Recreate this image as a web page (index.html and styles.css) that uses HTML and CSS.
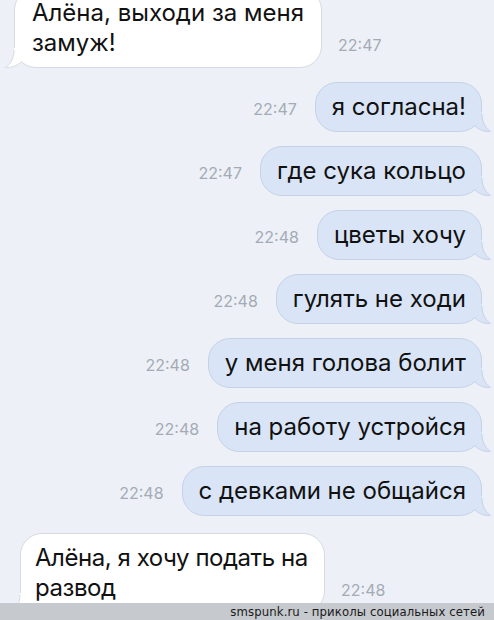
FILE: index.html
```html
<!DOCTYPE html>
<html>
<head>
    <title>Алёна</title>
    <link rel="stylesheet" href="styles.css">
</head>
<body>
    <div class="chat">
        <!-- Her -->
        <div class="row in first">
            <div class="bubble in-bubble wide1">
                Алёна, выходи за меня замуж!
                <svg class="tail" width="16" height="20" viewBox="0 0 16 20"><path class="tail-fill" d="M0,0 L7,0 C7,9 9.5,15.5 15.5,19.5 C10,19.8 4,18 0,14 Z"/><path class="tail-line" d="M7,2 C7,9 9.5,15.5 15.5,19.5 C10,19.8 4,18 0,14"/></svg>
            </div>
            <span class="time">22:47</span>
        </div>

        <!-- Him -->
        <div class="row out"><span class="time">22:47</span><div class="bubble out-bubble">я согласна!<svg class="tail" width="16" height="20" viewBox="0 0 16 20"><path class="tail-fill" d="M0,0 L7,0 C7,9 9.5,15.5 15.5,19.5 C10,19.8 4,18 0,14 Z"/><path class="tail-line" d="M7,2 C7,9 9.5,15.5 15.5,19.5 C10,19.8 4,18 0,14"/></svg></div></div>
        <div class="row out"><span class="time">22:47</span><div class="bubble out-bubble">где сука кольцо<svg class="tail" width="16" height="20" viewBox="0 0 16 20"><path class="tail-fill" d="M0,0 L7,0 C7,9 9.5,15.5 15.5,19.5 C10,19.8 4,18 0,14 Z"/><path class="tail-line" d="M7,2 C7,9 9.5,15.5 15.5,19.5 C10,19.8 4,18 0,14"/></svg></div></div>
        <div class="row out"><span class="time">22:48</span><div class="bubble out-bubble">цветы хочу<svg class="tail" width="16" height="20" viewBox="0 0 16 20"><path class="tail-fill" d="M0,0 L7,0 C7,9 9.5,15.5 15.5,19.5 C10,19.8 4,18 0,14 Z"/><path class="tail-line" d="M7,2 C7,9 9.5,15.5 15.5,19.5 C10,19.8 4,18 0,14"/></svg></div></div>
        <div class="row out"><span class="time">22:48</span><div class="bubble out-bubble">гулять не ходи<svg class="tail" width="16" height="20" viewBox="0 0 16 20"><path class="tail-fill" d="M0,0 L7,0 C7,9 9.5,15.5 15.5,19.5 C10,19.8 4,18 0,14 Z"/><path class="tail-line" d="M7,2 C7,9 9.5,15.5 15.5,19.5 C10,19.8 4,18 0,14"/></svg></div></div>
        <div class="row out"><span class="time">22:48</span><div class="bubble out-bubble">у меня голова болит<svg class="tail" width="16" height="20" viewBox="0 0 16 20"><path class="tail-fill" d="M0,0 L7,0 C7,9 9.5,15.5 15.5,19.5 C10,19.8 4,18 0,14 Z"/><path class="tail-line" d="M7,2 C7,9 9.5,15.5 15.5,19.5 C10,19.8 4,18 0,14"/></svg></div></div>
        <div class="row out"><span class="time">22:48</span><div class="bubble out-bubble">на работу устройся<svg class="tail" width="16" height="20" viewBox="0 0 16 20"><path class="tail-fill" d="M0,0 L7,0 C7,9 9.5,15.5 15.5,19.5 C10,19.8 4,18 0,14 Z"/><path class="tail-line" d="M7,2 C7,9 9.5,15.5 15.5,19.5 C10,19.8 4,18 0,14"/></svg></div></div>
        <div class="row out"><span class="time">22:48</span><div class="bubble out-bubble">с девками не общайся<svg class="tail" width="16" height="20" viewBox="0 0 16 20"><path class="tail-fill" d="M0,0 L7,0 C7,9 9.5,15.5 15.5,19.5 C10,19.8 4,18 0,14 Z"/><path class="tail-line" d="M7,2 C7,9 9.5,15.5 15.5,19.5 C10,19.8 4,18 0,14"/></svg></div></div>

        <!-- Her again -->
        <div class="row in last">
            <div class="bubble in-bubble wide2">
                Алёна, я хочу подать на<br>развод
                <svg class="tail" width="16" height="20" viewBox="0 0 16 20"><path class="tail-fill" d="M0,0 L7,0 C7,9 9.5,15.5 15.5,19.5 C10,19.8 4,18 0,14 Z"/><path class="tail-line" d="M7,2 C7,9 9.5,15.5 15.5,19.5 C10,19.8 4,18 0,14"/></svg>
            </div>
            <span class="time">22:48</span>
        </div>
    </div>

    <div class="watermark">smspunk.ru - приколы социальных сетей</div>
</body>
</html>
```

FILE: styles.css
```css
body {
    margin: 0;
    height: 620px;
    overflow: hidden;
    background: #edf1f7;
    font-family: Inter, "Liberation Sans", sans-serif;
}
.chat {
    display: flex;
    flex-direction: column;
    gap: 14px;
}
.row {
    display: flex;
    align-items: last baseline;
}
.row.in {
    justify-content: flex-start;
    gap: 16px;
}
.row.out {
    justify-content: flex-end;
    gap: 18px;
    padding-right: 12px;
}
.row.first {
    margin-top: -12px;
    padding-left: 14px;
}
.row.last {
    padding-left: 20px;
    margin-top: 3px;
}
.bubble {
    position: relative;
    box-sizing: border-box;
    padding: 9px 15px 9px 16px;
    border-radius: 22px;
    font-size: 24px;
    line-height: 30px;
    color: #111;
}
.in-bubble {
    background: #fff;
    border: 1px solid #d6dbe3;
    padding-left: 17px;
}
.out-bubble {
    background: #d9e5f6;
    border: 1px solid #c5d2e5;
}
.wide1 {
    width: 308px;
}
.wide2 {
    width: 305px;
    padding-left: 14px;
    white-space: nowrap;
    letter-spacing: -0.45px;
}
.time {
    font-size: 16px;
    color: #a4abb5;
}
.tail {
    position: absolute;
    bottom: -1px;
    right: -10px;
}
.in-bubble .tail {
    right: auto;
    left: -10px;
    transform: scaleX(-1);
}
.in-bubble .tail-fill { fill: #fff; }
.in-bubble .tail-line { fill: none; stroke: #d6dbe3; }
.out-bubble .tail-fill { fill: #d9e5f6; }
.out-bubble .tail-line { fill: none; stroke: #c5d2e5; }
.watermark {
    position: absolute;
    left: 0;
    right: 0;
    top: 603px;
    height: 17px;
    background: #c6c9ce;
    text-align: right;
    padding-right: 9px;
    font-family: "DejaVu Sans Condensed", "DejaVu Sans", sans-serif;
    font-size: 13px;
    line-height: 17px;
    letter-spacing: 0.1px;
    color: #1a1a1a;
}
```
